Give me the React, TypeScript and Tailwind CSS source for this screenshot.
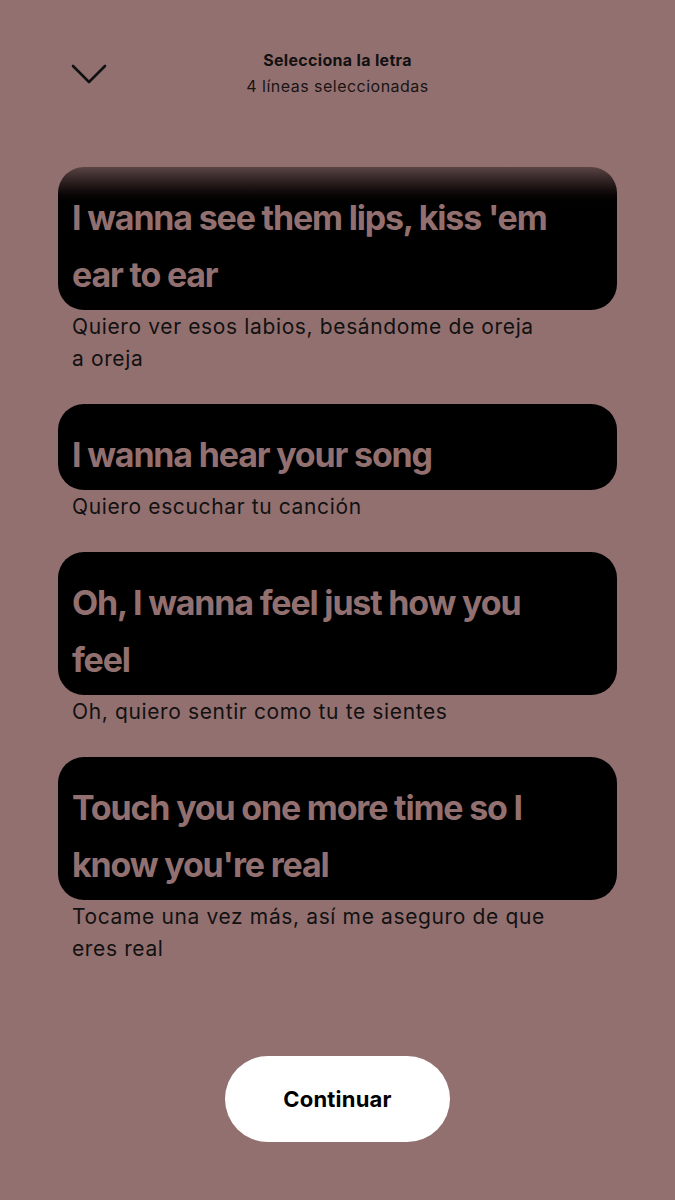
const lines = [
  { en: "I wanna see them lips, kiss 'em ear to ear", es: 'Quiero ver esos labios, besándome de oreja a oreja', fade: true },
  { en: 'I wanna hear your song', es: 'Quiero escuchar tu canción' },
  { en: 'Oh, I wanna feel just how you feel', es: 'Oh, quiero sentir como tu te sientes' },
  { en: "Touch you one more time so I know you're real", es: 'Tocame una vez más, así me aseguro de que eres real' },
]

function Chevron() {
  return (
    <svg width="36" height="20" viewBox="0 0 36 20" fill="none">
      <path d="M2 2l16 16L34 2" stroke="#111" strokeWidth="2.6" strokeLinecap="round" strokeLinejoin="round" />
    </svg>
  )
}

export default function App() {
  return (
    <div className="flex h-[1200px] w-[675px] flex-col bg-[#937070]" style={{ fontFamily: 'Inter, "Noto Sans", sans-serif' }}>
      {/* header */}
      <div className="relative mt-[48px] flex flex-col items-center">
        <div className="absolute left-[71px] top-[16px]">
          <Chevron />
        </div>
        <div className="text-[16px] font-bold leading-[25px] tracking-[0.02em] text-[#111]">Selecciona la letra</div>
        <div className="text-[16px] leading-[26px] tracking-[0.03em] text-[#1a1414]">4 líneas seleccionadas</div>
      </div>

      {/* lyric cards */}
      <div className="mt-[68px] flex flex-col">
        {lines.map((l, i) => (
          <div key={i} className="mb-[29px]">
            <div
              className={
                'mx-[58px] rounded-[26px] pb-[7px] pl-[14px] pr-[40px] pt-[22px] ' +
                (l.fade ? 'bg-gradient-to-b from-[#5a4444] from-0% to-black to-[28%]' : 'bg-black')
              }
            >
              <div className="text-[34px] font-bold leading-[57px] tracking-[-0.035em] text-[#937070]">{l.en}</div>
            </div>
            <div className="mt-[1px] max-w-[548px] pl-[72px] text-[21px] leading-[32px] tracking-[0.03em] text-[#111]">{l.es}</div>
          </div>
        ))}
      </div>

      <div className="mb-[58px] mt-auto flex justify-center">
        <button className="h-[86px] w-[225px] rounded-full bg-white text-[22px] font-bold tracking-[0.01em] text-black">Continuar</button>
      </div>
    </div>
  )
}
